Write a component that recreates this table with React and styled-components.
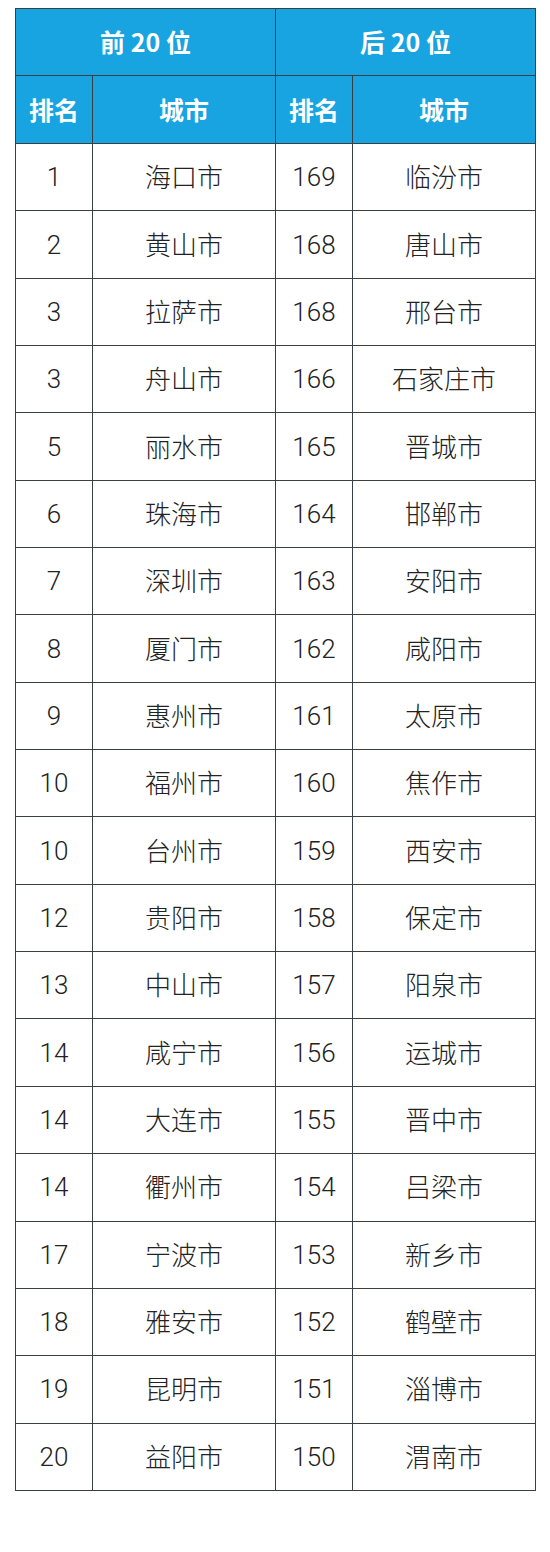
import React from 'react';
import styled, { createGlobalStyle } from 'styled-components';

const Global = createGlobalStyle`
  html, body { margin: 0; padding: 0; background: #fff; }
  body { font-family: "Liberation Sans", "Noto Sans CJK SC", sans-serif; }
`;

const Page = styled.div`
  width: 550px;
  height: 1552px;
  padding: 8px 0 0 15px;
  box-sizing: border-box;
`;

const Grid = styled.div`
  display: inline-grid;
  grid-template-columns: 76px 182px 76px 182px;
  grid-template-rows: 66px 67px repeat(20, 66.35px);
  gap: 1px;
  padding: 1px;
  background: #3a3f44;
`;

const Head = styled.div`
  grid-column: ${p => p.span ? `span ${p.span}` : 'auto'};
  background: #18a3e1;
  color: #fff;
  font-family: "Noto Sans CJK SC", sans-serif;
  font-weight: 700;
  font-size: 25px;
  display: flex;
  align-items: center;
  justify-content: center;
  padding-bottom: 2px;
`;

const Cell = styled.div`
  background: #fff;
  color: #222;
  font-family: ${p => p.num ? 'Roboto, "Liberation Sans", sans-serif' : '"Noto Sans CJK SC", sans-serif'};
  font-weight: 300;
  font-size: 26px;
  display: flex;
  align-items: center;
  justify-content: center;
  padding-bottom: ${p => p.num ? '0' : '3px'};
`;

const rows = [
  ['1', '海口市', '169', '临汾市'],
  ['2', '黄山市', '168', '唐山市'],
  ['3', '拉萨市', '168', '邢台市'],
  ['3', '舟山市', '166', '石家庄市'],
  ['5', '丽水市', '165', '晋城市'],
  ['6', '珠海市', '164', '邯郸市'],
  ['7', '深圳市', '163', '安阳市'],
  ['8', '厦门市', '162', '咸阳市'],
  ['9', '惠州市', '161', '太原市'],
  ['10', '福州市', '160', '焦作市'],
  ['10', '台州市', '159', '西安市'],
  ['12', '贵阳市', '158', '保定市'],
  ['13', '中山市', '157', '阳泉市'],
  ['14', '咸宁市', '156', '运城市'],
  ['14', '大连市', '155', '晋中市'],
  ['14', '衢州市', '154', '吕梁市'],
  ['17', '宁波市', '153', '新乡市'],
  ['18', '雅安市', '152', '鹤壁市'],
  ['19', '昆明市', '151', '淄博市'],
  ['20', '益阳市', '150', '渭南市'],
];

export default function App() {
  return (
    <Page>
      <Global />
      <Grid>
        <Head span={2}>前 20 位</Head>
        <Head span={2}>后 20 位</Head>
        <Head>排名</Head>
        <Head>城市</Head>
        <Head>排名</Head>
        <Head>城市</Head>
        {rows.map((r, i) => (
          <React.Fragment key={i}>
            <Cell num>{r[0]}</Cell>
            <Cell>{r[1]}</Cell>
            <Cell num>{r[2]}</Cell>
            <Cell>{r[3]}</Cell>
          </React.Fragment>
        ))}
      </Grid>
    </Page>
  );
}
